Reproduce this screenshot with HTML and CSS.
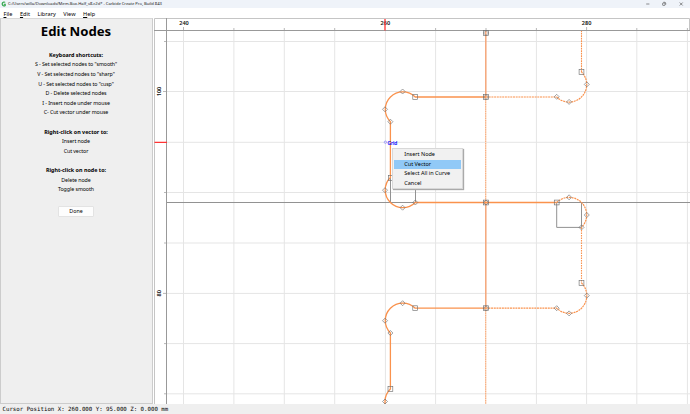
FILE: index.html
```html
<!DOCTYPE html>
<html lang="en">
<head>
<meta charset="utf-8">
<title>Carbide Create Pro</title>
<link rel="stylesheet" href="styles.css">
</head>
<body>
<div class="app">
  <header class="titlebar">
    <svg class="logo" viewBox="0 0 5 6"><path d="M4.2 1.4A1.8 2 0 1 0 4.2 4.5V3.2H2.7" fill="none" stroke="#27a243" stroke-width="1.1"/></svg>
    <span class="title">C:/Users/willa/Downloads/Mem-Box-Half_v8.c2d* - Carbide Create Pro, Build 843</span>
    <svg class="controls" viewBox="0 0 50 8"><g fill="none" stroke="#444" stroke-width=".6"><path d="M6.2 4h3.2"/><rect x="22.6" y="3" width="2.4" height="2.4" rx=".5"/><path d="M23.4 2.3h1.3q1 0 1 1v1.3M39.7 2.5l3 3M42.7 2.5l-3 3"/></g></svg>
  </header>
  <nav class="menubar"><span><u>F</u>ile</span><span><u>E</u>dit</span><span>Library</span><span>View</span><span><u>H</u>elp</span></nav>
  <main class="workspace">
    <aside class="panel">
      <h1>Edit Nodes</h1>
      <section>
        <h2>Keyboard shortcuts:</h2>
        <p>S - Set selected nodes to "smooth"</p>
        <p>V - Set selected nodes to "sharp"</p>
        <p>U - Set selected nodes to "cusp"</p>
        <p>D - Delete selected nodes</p>
        <p>I - Insert node under mouse</p>
        <p>C- Cut vector under mouse</p>
      </section>
      <section>
        <h2>Right-click on vector to:</h2>
        <p>Insert node</p>
        <p>Cut vector</p>
      </section>
      <section>
        <h2>Right-click on node to:</h2>
        <p>Delete node</p>
        <p>Toggle smooth</p>
      </section>
      <button class="done">Done</button>
    </aside>
    <div class="canvas">
      <svg class="drawing" viewBox="154 18 536 386">
        <defs>
          <rect id="s" x="-2.4" y="-2.4" width="4.8" height="4.8"/>
          <path id="d" d="M0-2.5L2.5 0L0 2.5L-2.5 0Z"/>
        </defs>
        <path class="grid" d="M183.5 31V404M233.9 31V404M284.3 31V404M334.7 31V404M385.4 31V404M435.6 31V404M536.4 31V404M586.6 31V404M636.8 31V404M687.4 31V404M167 41.5H690M167 91.5H690M167 142.3H690M167 192.5H690M167 243H690M167 293.4H690M167 343.6H690M167 393.8H690"/>
        <path class="frame" d="M154.5 404V18.5H689.5V30"/>
        <path class="axis" d="M154 30.5H690M166.5 18V404"/>
        <path class="tick" d="M183.5 27V30M233.9 28V30M284.3 28V30M334.7 28V30M435.6 28V30M486 28V30M536.4 28V30M586.6 27V30M636.8 28V30M687.4 28V30M164 41.5H166M163 91.5H166M164 192.5H166M164 243H166M163 293.4H166M164 343.6H166M164 393.8H166"/>
        <g class="ruler" text-anchor="middle">
          <text x="184" y="24.9">240</text><text x="385.4" y="24.9">260</text><text x="586.6" y="24.9">280</text>
          <text transform="translate(161.2 91.5) rotate(-90)">100</text>
          <text transform="translate(161.2 293.2) rotate(-90)">80</text>
        </g>
        <path class="cursor" d="M385 19V30.5M154.5 142.4H167"/>
        <path class="stock" d="M167 202.5H415.3M556.7 202.5H690M390.5 177.5V202.5M415.5 180V202.5M556.7 202.5V227.4H581.5V202.5"/>
        <path class="center" d="M485.7 97V202.5M485.7 308V404"/>
        <path class="center-dash" d="M485.7 97V202.5M485.7 308V404"/>
        <path class="center-solid" d="M485.8 31V97M485.8 202.5V308"/>
        <path class="curve" d="M486 97H415.2A17.5 17.5 0 1 0 390.4 121.7V177.5A17.5 17.5 0 1 0 415.3 202.5H556.7M486 308.2H415.2A17.5 17.5 0 1 0 390.4 333V389A17.5 17.5 0 0 0 385 401.3V404"/>
        <path class="dashed" d="M486 97H556.7A17.5 17.5 0 0 0 581.5 72M556.7 202.5A17.5 17.5 0 0 1 581.5 227.4M581.5 283A17.5 17.5 0 0 1 556.7 308.2H486"/>
        <path class="dashed-v" d="M581.5 72V31M581.5 227.4V283"/>
        <g class="nodes">
          <use href="#s" x="486" y="33"/><use href="#d" x="486" y="33"/>
          <use href="#s" x="415.2" y="97"/><use href="#s" x="486" y="97"/><use href="#d" x="486" y="97"/>
          <use href="#s" x="581.5" y="72"/><use href="#s" x="391" y="178"/>
          <use href="#s" x="486" y="202.5"/><use href="#d" x="486" y="202.5"/><use href="#s" x="556.7" y="202.5"/>
          <use href="#s" x="415.2" y="308.2"/><use href="#s" x="486" y="308.2"/><use href="#d" x="486" y="308.2"/>
          <use href="#s" x="581.5" y="283"/><use href="#s" x="390.4" y="389"/>
          <use href="#d" x="402.6" y="91.5"/><use href="#d" x="385" y="109.3"/><use href="#d" x="390.4" y="121.7"/>
          <use href="#d" x="385" y="190.2"/><use href="#d" x="402.6" y="207.7"/><use href="#d" x="415.3" y="202.5"/>
          <use href="#d" x="556.7" y="96.8"/><use href="#d" x="569.1" y="101.9"/><use href="#d" x="586.8" y="84.4"/>
          <use href="#d" x="569.1" y="197.3"/><use href="#d" x="586.8" y="215"/><use href="#d" x="581.5" y="227.4"/>
          <use href="#d" x="586.8" y="295.6"/><use href="#d" x="569.1" y="313.4"/><use href="#d" x="556.7" y="308.2"/>
          <use href="#d" x="402.6" y="303.2"/><use href="#d" x="385" y="320.7"/><use href="#d" x="390.4" y="333"/><use href="#d" x="385" y="401.5"/>
        </g>
        <circle class="snap-dot" cx="385.4" cy="142.2" r="1.2"/>
        <text class="snap" x="387.5" y="144.8" textLength="9.8" lengthAdjust="spacingAndGlyphs">Grid</text>
      </svg>
      <div class="context-menu">
        <div>Insert Node</div>
        <div class="active">Cut Vector</div>
        <div>Select All in Curve</div>
        <div>Cancel</div>
      </div>
    </div>
  </main>
  <footer class="status">Cursor Position X: 260.000 Y: 95.000 Z: 0.000 mm</footer>
</div>
</body>
</html>
```
FILE: styles.css
```css
* { box-sizing: border-box; }
body { margin: 0; background: #fff; color: #000; font-family: "Noto Sans", sans-serif; font-size: 5.3px; }
.app { width: 690px; height: 414px; display: grid; grid-template-rows: 8px 10px 386px 10px; overflow: hidden; }
.titlebar { display: flex; align-items: center; background: #eff3f9; white-space: nowrap; color: #222; }
.logo { width: 5px; height: 6px; margin-left: 1px; }
.title { margin-left: 2px; font-size: 4.2px; line-height: 8px; letter-spacing: -.055px; }
.controls { width: 50px; height: 8px; margin-left: auto; }
.menubar { display: flex; gap: 7.5px; padding-left: 3.5px; line-height: 12px; font-size: 5.6px; }
.menubar u { text-underline-offset: .5px; text-decoration-thickness: .5px; }
.workspace { display: grid; grid-template-columns: 154px 536px; }
.panel { display: flex; flex-direction: column; align-items: center; background: #efefef; border: 1px solid #ccc; border-top-color: #d8d8d8; width: 153px; padding-right: 1px; text-align: center; }
.panel h1 { margin: 2px 0 9.8px; font: bold 13.15px/20px "Noto Sans", sans-serif; }
.panel section { margin-bottom: 9.6px; }
.panel h2, .panel p { margin: 0; line-height: 9.6px; white-space: nowrap; }
.panel h2 { font-size: 5.4px; font-weight: 700; }
.panel p { font-size: 5.3px; letter-spacing: -.08px; }
.done { width: 36px; height: 11px; padding: 0; margin-top: 1.3px; border: 1px solid #e3e3e3; border-radius: 1px; background: #fdfdfd; color: #000; font: 5.3px/9px "Noto Sans", sans-serif; }
.canvas { position: relative; background: #fff; }
.drawing { display: block; width: 536px; height: 386px; }
.drawing path { fill: none; }
.grid { stroke: #e5e5e5; }
.frame { stroke: #c5c5c5; }
.axis { stroke: #999; }
.tick { stroke: #999; stroke-width: .7; }
.ruler { font: 600 5.6px "Noto Sans", sans-serif; fill: #111; }
.cursor { stroke: #ff3434; stroke-width: 1.3; }
.stock { stroke: #929292; }
.center { stroke: #fbd5bd; stroke-width: 1.2; }
.center-dash { stroke: #f5a775; stroke-width: 1; stroke-dasharray: 1.3 1; }
.center-solid { stroke: #f4a77a; stroke-width: 1.5; }
.curve { stroke: #fa924d; stroke-width: 1.3; }
.dashed { stroke: #fa924d; stroke-width: 1.2; stroke-dasharray: 2 .7; }
.dashed-v { stroke: #fa924d; stroke-width: 1.1; stroke-dasharray: 1.7 .8; }
.nodes { fill: none; stroke: #707070; stroke-width: .65; }
.nodes path { fill: none; }
.snap { fill: #00f; stroke: #00f; stroke-width: .15; font: 500 5.3px "Noto Sans", sans-serif; }
.snap-dot { fill: none; stroke: #77f; stroke-width: .6; }
.context-menu { position: absolute; left: 238px; top: 130px; width: 71px; height: 41px; padding: 1px 1px; background: #f1f1f1; border: .5px solid #d8d8d8; box-shadow: 1px 1px 1px #aaa; }
.context-menu div { height: 9.6px; padding-left: 10.3px; line-height: 9.6px; font-size: 5.5px; white-space: nowrap; }
.context-menu .active { background: #91c9f7; }
.status { background: #efefef; padding-left: 2.5px; font: 5.74px/10px "DejaVu Sans Mono", monospace; white-space: pre; }
```
